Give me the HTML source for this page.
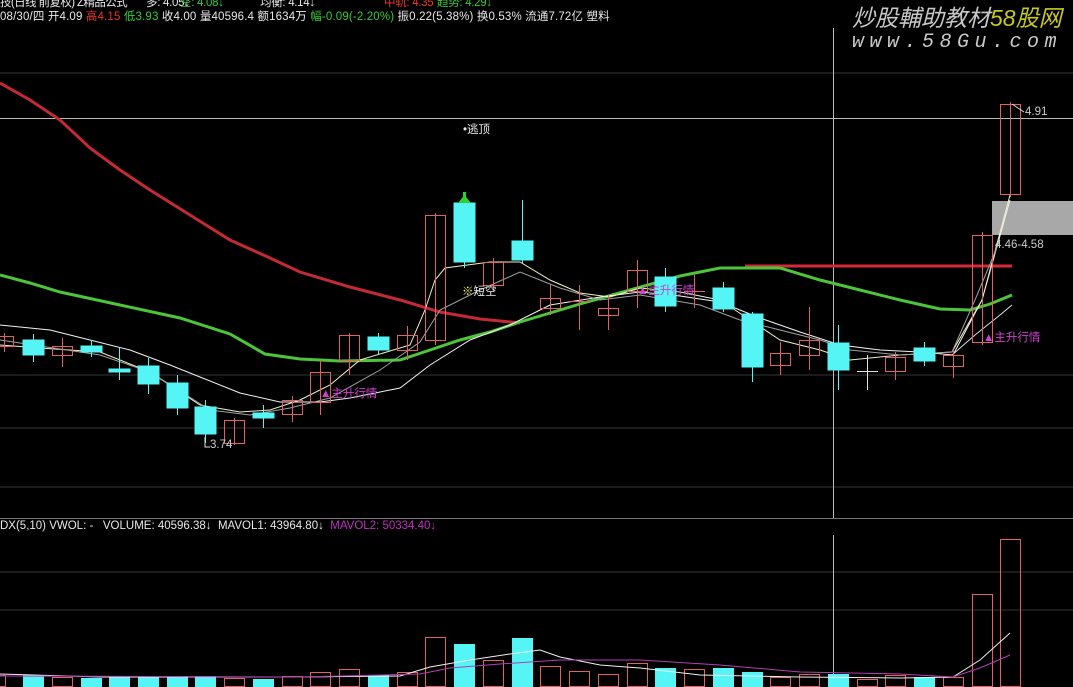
<!DOCTYPE html>
<html><head><meta charset="utf-8"><style>
html,body{margin:0;padding:0;background:#000;width:1073px;height:687px;overflow:hidden;}
.t{position:absolute;font-family:"Liberation Sans","Noto Sans CJK SC",sans-serif;font-size:11.5px;white-space:nowrap;color:#e8e8e8;line-height:13px;}
</style></head><body>
<svg width="1073" height="687" style="position:absolute;left:0;top:0" xmlns="http://www.w3.org/2000/svg">
<g stroke="#1a1a1a" stroke-width="2">
<line x1="0" y1="73" x2="1073" y2="73"/><line x1="0" y1="375" x2="1073" y2="375"/><line x1="0" y1="428" x2="1073" y2="428"/><line x1="0" y1="487" x2="1073" y2="487"/>
<line x1="0" y1="572" x2="1073" y2="572"/><line x1="0" y1="610" x2="1073" y2="610"/>
</g>
<line x1="0" y1="518.5" x2="1073" y2="518.5" stroke="#777" stroke-width="1"/>
<line x1="0" y1="118.5" x2="1073" y2="118.5" stroke="#bbb" stroke-width="1"/>
<line x1="833.5" y1="28" x2="833.5" y2="518" stroke="#bbb" stroke-width="1"/>
<line x1="833.5" y1="535" x2="833.5" y2="687" stroke="#bbb" stroke-width="1"/>
<rect x="992" y="201" width="81" height="34" fill="#a8a8a8"/>
<polyline fill="none" stroke="#c42a35" stroke-width="3" points="0,83 30,100 60,120 90,148 120,170 150,190 190,215 230,240 270,258 300,272 350,287 400,300 440,312 480,319 520,323"/>
<line x1="745" y1="266" x2="1012" y2="266" stroke="#d42a3a" stroke-width="3"/>
<polyline fill="none" stroke="#4ec43a" stroke-width="3" points="0,275 30,283 60,292 120,305 180,318 230,334 265,354 300,359 340,361 400,360 430,350 460,340 490,332 520,322 580,304 630,290 680,276 720,268 780,268 820,280 860,290 900,300 940,309 970,310 990,304 1012,295"/>
<polyline fill="none" stroke="#f2f2f2" stroke-width="1" points="0,325 50,330 90,340 130,350 170,365 200,377 240,393 280,402 320,402 350,398 400,388 430,365 470,340 510,325 550,305 600,297 640,292 680,296 720,302 760,318 800,332 840,345 880,350 920,352 953,355 982,300 1010,200"/>
<polyline fill="none" stroke="#f0f0c0" stroke-width="1" points="0,345 40,348 100,352 150,372 200,405 240,412 270,410 300,400 330,385 360,360 410,345 425,310 435,280 445,268 490,262 520,262 550,280 580,293 610,297 640,288 680,292 720,300 750,320 780,340 820,350 850,360 900,355 952,352 982,300 1010,195"/>
<polyline fill="none" stroke="#a0a0a0" stroke-width="1" points="0,340 100,355 150,372 210,410 250,415 290,408 330,398 380,370 420,342 440,310 480,290 520,272 560,288 600,300 640,295 700,305 740,320 780,330 820,340 850,350 900,355 952,352 975,300 1000,240"/>
<polyline fill="none" stroke="#e0e0e0" stroke-width="1" points="952,355 975,335 1000,315 1012,305"/>
<g stroke-width="1">
<g stroke="#e06068" fill="none">
<line x1="4.5" y1="333" x2="4.5" y2="352"/><rect x="-6.5" y="336.5" width="20" height="10"/>
<line x1="62.5" y1="338" x2="62.5" y2="367"/><rect x="52.5" y="346.5" width="20" height="9"/>
<line x1="234.5" y1="418" x2="234.5" y2="445"/><rect x="224.5" y="420.5" width="20" height="23"/>
<line x1="292.5" y1="396" x2="292.5" y2="422"/><rect x="282.5" y="400.5" width="20" height="14"/>
<line x1="320.5" y1="360" x2="320.5" y2="415"/><rect x="310.5" y="372.5" width="20" height="30"/>
<line x1="349.5" y1="333" x2="349.5" y2="375"/><rect x="339.5" y="335.5" width="20" height="25"/>
<line x1="407.5" y1="326" x2="407.5" y2="360"/><rect x="397.5" y="335.5" width="20" height="15"/>
<line x1="435.5" y1="213" x2="435.5" y2="345"/><rect x="425.5" y="215.5" width="20" height="125"/>
<line x1="493.5" y1="258" x2="493.5" y2="292"/><rect x="483.5" y="262.5" width="20" height="23"/>
<line x1="550.5" y1="285" x2="550.5" y2="315"/><rect x="540.5" y="298.5" width="20" height="10"/>
<line x1="579.5" y1="285" x2="579.5" y2="330"/><line x1="569" y1="301.5" x2="590" y2="301.5"/>
<line x1="608.5" y1="295" x2="608.5" y2="330"/><rect x="598.5" y="308.5" width="20" height="7"/>
<line x1="637.5" y1="260" x2="637.5" y2="308"/><rect x="627.5" y="270.5" width="20" height="21"/>
<line x1="694.5" y1="275" x2="694.5" y2="308"/><line x1="684" y1="291.5" x2="705" y2="291.5"/>
<line x1="780.5" y1="342" x2="780.5" y2="375"/><rect x="770.5" y="353.5" width="20" height="12"/>
<line x1="809.5" y1="307" x2="809.5" y2="370"/><rect x="799.5" y="340.5" width="20" height="15"/>
<line x1="895.5" y1="352" x2="895.5" y2="380"/><rect x="885.5" y="357.5" width="20" height="14"/>
<line x1="953.5" y1="350" x2="953.5" y2="378"/><rect x="943.5" y="355.5" width="20" height="11"/>
<line x1="982.5" y1="232" x2="982.5" y2="345"/><rect x="972.5" y="235.5" width="20" height="107"/>
<line x1="1010.5" y1="102" x2="1010.5" y2="197"/><rect x="1000.5" y="104.5" width="20" height="90"/>
</g>
<g stroke="#e0e0e0"><line x1="867.5" y1="355" x2="867.5" y2="390"/><line x1="857" y1="371.5" x2="878" y2="371.5"/></g>
<g stroke="#55f5f5" fill="#55f5f5">
<line x1="33.5" y1="334" x2="33.5" y2="362"/><rect x="23" y="340" width="21" height="15"/>
<line x1="91.5" y1="340" x2="91.5" y2="357"/><rect x="81" y="346" width="21" height="6"/>
<line x1="119.5" y1="348" x2="119.5" y2="380"/><rect x="109" y="369" width="21" height="3"/>
<line x1="148.5" y1="358" x2="148.5" y2="394"/><rect x="138" y="366" width="21" height="18"/>
<line x1="177.5" y1="375" x2="177.5" y2="415"/><rect x="167" y="383" width="21" height="25"/>
<line x1="205.5" y1="400" x2="205.5" y2="443"/><rect x="195" y="407" width="21" height="27"/>
<line x1="263.5" y1="405" x2="263.5" y2="428"/><rect x="253" y="413" width="21" height="5"/>
<line x1="378.5" y1="333" x2="378.5" y2="355"/><rect x="368" y="337" width="21" height="13"/>
<line x1="464.5" y1="198" x2="464.5" y2="268"/><rect x="454" y="203" width="21" height="59"/>
<line x1="522.5" y1="200" x2="522.5" y2="263"/><rect x="512" y="241" width="21" height="19"/>
<line x1="665.5" y1="268" x2="665.5" y2="312"/><rect x="655" y="277" width="21" height="29"/>
<line x1="723.5" y1="282" x2="723.5" y2="312"/><rect x="713" y="288" width="21" height="21"/>
<line x1="752.5" y1="312" x2="752.5" y2="382"/><rect x="742" y="314" width="21" height="53"/>
<line x1="838.5" y1="325" x2="838.5" y2="390"/><rect x="828" y="343" width="21" height="27"/>
<line x1="924.5" y1="342" x2="924.5" y2="366"/><rect x="914" y="348" width="21" height="13"/>
</g>
</g>
<polygon points="458,203 471,203 464.5,195" fill="#2fd030"/><rect x="463" y="192" width="3" height="6" fill="#2fd030"/>
<polyline fill="none" stroke="#ddd" points="205,437 205,447 210,447"/>
<polyline fill="none" stroke="#ddd" points="1012,104 1024,112"/>
<g stroke="#e06068" fill="none">
<rect x="52.5" y="677.5" width="20" height="9"/><rect x="224.5" y="678.5" width="20" height="8"/>
<rect x="282.5" y="676.5" width="20" height="10"/><rect x="310.5" y="672.5" width="20" height="14"/>
<rect x="339.5" y="669.5" width="20" height="17"/><rect x="397.5" y="672.5" width="20" height="14"/>
<rect x="425.5" y="637.5" width="20" height="49"/><rect x="483.5" y="660.5" width="20" height="26"/>
<rect x="540.5" y="666.5" width="20" height="20"/><rect x="569.5" y="671.5" width="20" height="15"/>
<rect x="598.5" y="674.5" width="20" height="12"/><rect x="627.5" y="663.5" width="20" height="23"/>
<rect x="684.5" y="669.5" width="20" height="17"/><rect x="770.5" y="677.5" width="20" height="9"/>
<rect x="799.5" y="674.5" width="20" height="12"/><rect x="857.5" y="679.5" width="20" height="7"/>
<rect x="885.5" y="675.5" width="20" height="11"/><rect x="943.5" y="677.5" width="20" height="9"/>
<rect x="972.5" y="594.5" width="20" height="92"/><rect x="1000.5" y="539.5" width="20" height="147"/>
<rect x="-6.5" y="675.5" width="12" height="11"/>
</g>
<g fill="#55f5f5">
<rect x="23" y="675" width="21" height="12"/><rect x="81" y="678" width="21" height="9"/>
<rect x="109" y="676" width="21" height="11"/><rect x="138" y="676" width="21" height="11"/>
<rect x="167" y="676" width="21" height="11"/><rect x="195" y="676" width="21" height="11"/>
<rect x="253" y="679" width="21" height="8"/><rect x="368" y="675" width="21" height="12"/>
<rect x="454" y="644" width="21" height="43"/><rect x="512" y="638" width="21" height="49"/>
<rect x="655" y="668" width="21" height="19"/><rect x="713" y="668" width="21" height="19"/>
<rect x="742" y="672" width="21" height="15"/><rect x="828" y="674" width="21" height="13"/>
<rect x="914" y="677" width="21" height="10"/>
</g>
<polyline fill="none" stroke="#f0f0f0" points="0,674 100,677 200,677 300,677 400,676 430,667 470,660 510,654 540,650 560,657 600,665 640,668 700,675 800,677 900,678 953,677 980,660 1010,633"/>
<polyline fill="none" stroke="#b040b0" points="0,676 300,677 420,674 450,668 500,664 560,660 640,660 720,665 800,672 900,674 953,677 980,668 1010,655"/>
</svg>
<div class="t" style="left:0;top:-3px;letter-spacing:-0.6px">技(日线 前复权) Z精品公式</div>
<div class="t" style="left:146px;top:-3px;letter-spacing:-0.3px">多: 4.05↓</div>
<div class="t" style="left:180px;top:-3px;color:#3c3;letter-spacing:-0.3px">空: 4.08↓</div>
<div class="t" style="left:260px;top:-3px;letter-spacing:-0.3px">均衡: 4.14↓</div>
<div class="t" style="left:384px;top:-3px;color:#e33;letter-spacing:-0.3px">中轨: 4.35</div>
<div class="t" style="left:437px;top:-3px;color:#3c3;letter-spacing:-0.3px">趋势: 4.29↓</div>
<div class="t" style="left:0;top:11px;letter-spacing:0.15px">08/30/四 开4.09 <span style="color:#e33">高4.15</span> <span style="color:#3c3">低3.93</span> 收4.00 量40596.4 额1634万 <span style="color:#3c3">幅-0.09(-2.20%)</span> 振0.22(5.38%) 换0.53% 流通7.72亿 塑料</div>
<div class="t" style="left:0;top:520px">DX(5,10) VWOL: -&nbsp;&nbsp; VOLUME: 40596.38↓&nbsp; MAVOL1: 43964.80↓&nbsp; <span style="color:#c030c0">MAVOL2: 50334.40↓</span></div>
<div class="t" style="left:463px;top:124px">•逃顶</div>
<div class="t" style="left:462px;top:286px"><span style="color:#ee6">※</span>短空</div>
<div class="t" style="left:320px;top:388px;color:#d040d0">▲主升行情</div>
<div class="t" style="left:637px;top:285px;color:#d040d0">▲主升行情</div>
<div class="t" style="left:983px;top:332px;color:#d040d0">▲主升行情</div>
<div class="t" style="left:210px;top:439px;color:#ccc">3.74</div>
<div class="t" style="left:1025px;top:106px;color:#ccc">4.91</div>
<div class="t" style="left:995px;top:239px;color:#ccc">4.46-4.58</div>
<div class="t" style="left:852px;top:5px;font-size:23px;line-height:26px;font-style:italic;color:#c8c8c8">炒股輔助教材<span style="color:#c8c820">58股网</span></div>
<div class="t" style="left:852px;top:32px;font-family:'Liberation Mono',monospace;font-size:20px;line-height:22px;font-style:italic;color:#c8c8c8;letter-spacing:5.5px">www.58Gu.com</div>
</body></html>
